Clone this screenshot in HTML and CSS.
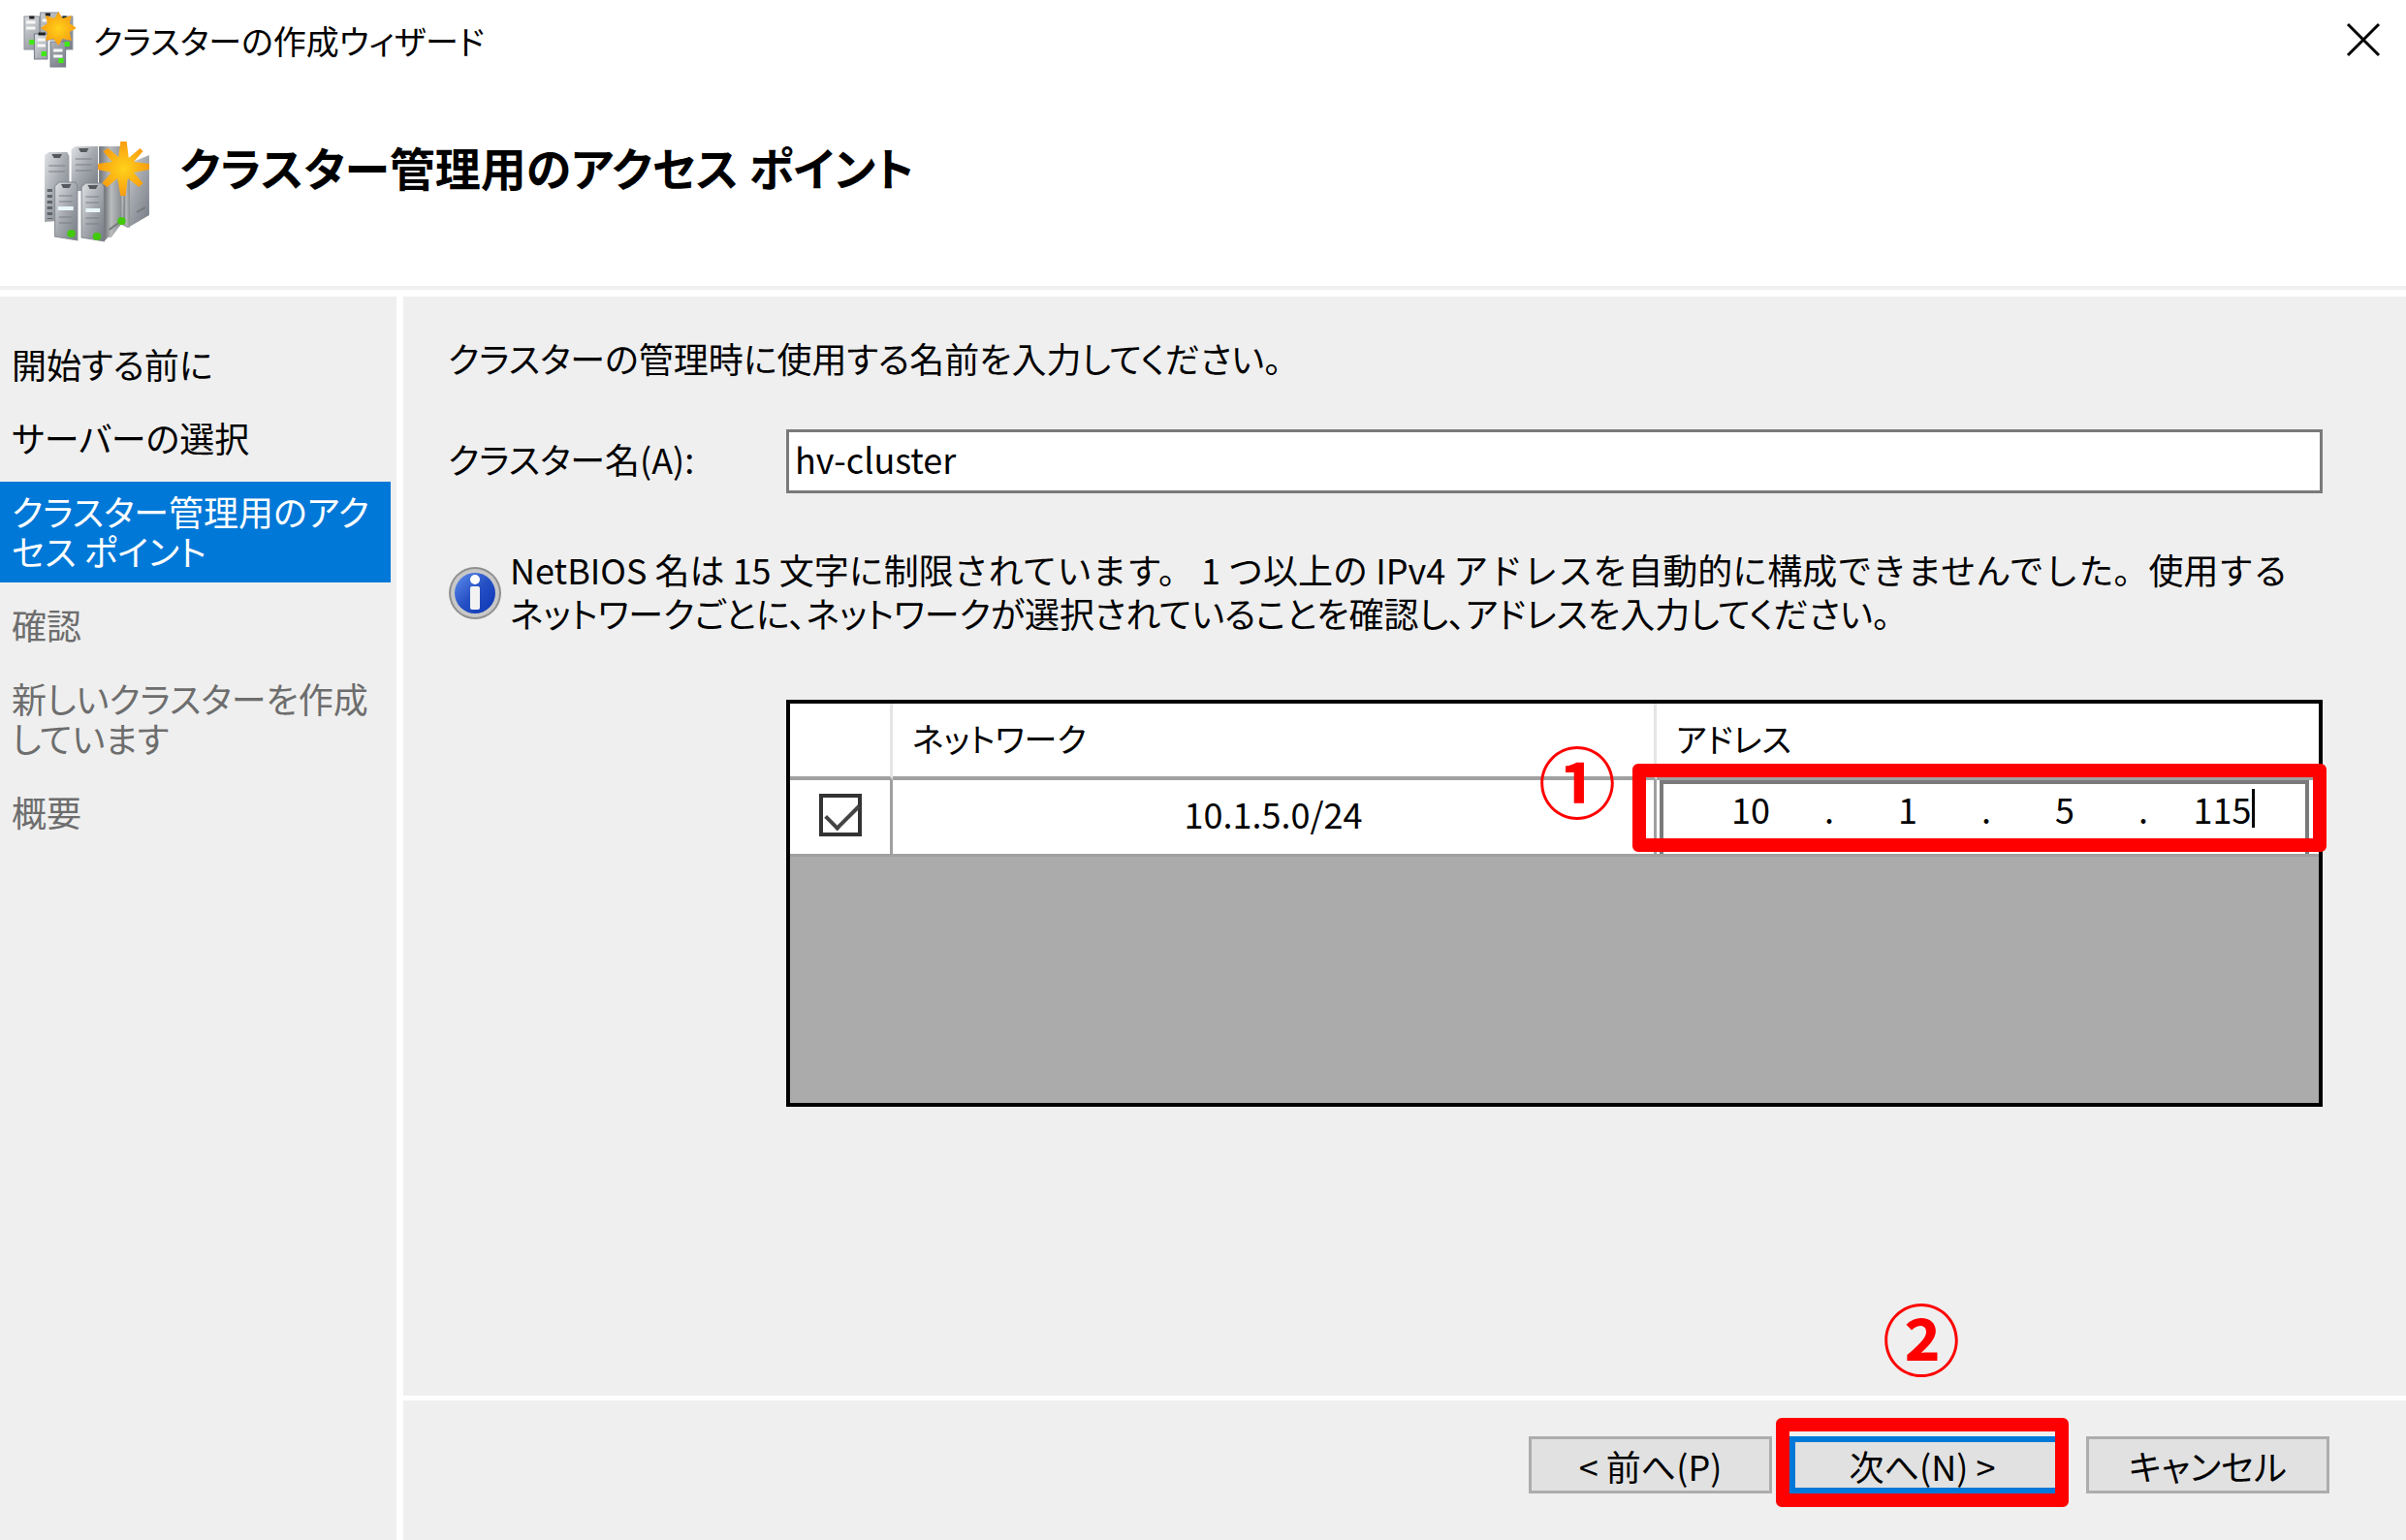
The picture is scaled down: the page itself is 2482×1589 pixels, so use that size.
FILE: index.html
```html
<!DOCTYPE html>
<html lang="ja">
<head>
    <meta charset="UTF-8">
    <meta name="viewport" content="width=device-width, initial-scale=1.0">
    <title>クラスターの作成ウィザード</title>
    <link rel="stylesheet" href="styles.css">
</head>
<body>
    <div class="titlebar">
        <svg class="titleIcon" viewBox="0 0 52 58" preserveAspectRatio="none" aria-hidden="true">
            <defs>
                <linearGradient id="metal" x1="0" x2="1" y1="0" y2="1">
                    <stop offset="0" stop-color="#e0e2e4"/>
                    <stop offset="0.5" stop-color="#a3a7ad"/>
                    <stop offset="1" stop-color="#747a84"/>
                </linearGradient>
                <linearGradient id="side" x1="0" x2="1" y1="0" y2="0">
                    <stop offset="0" stop-color="#6f7276"/>
                    <stop offset="0.4" stop-color="#b9bbbd"/>
                    <stop offset="1" stop-color="#8b8e91"/>
                </linearGradient>
                <radialGradient id="sun">
                    <stop offset="0" stop-color="#ffd21a"/>
                    <stop offset="1" stop-color="#f99d10"/>
                </radialGradient>
            </defs>
            <path fill="url(#metal)" stroke="#8a909a" d="M1 5h15v34H1zM17 1h18v28H17zM34 5h15v34H34z"/>
            <path fill="url(#metal)" stroke="#747b87" d="M11 23h13v26H11zM27 31h15v26H27z"/>
            <path stroke="#f7f7f7" stroke-width="3" d="M3 11h9M3 17h9M19 9h8M19 16h8M14 29h8M14 35h8M30 40h9M30 46h9"/>
            <path stroke="#222" stroke-width="3" d="M6 6h5M22 3h5M15 23h7M39 6h4"/>
            <path fill="url(#sun)" d="M35 0l4 7 9-3-2 8 7 5-7 4 2 9-9-2-4 7-5-7-8 2 2-9-7-4 7-5-2-8 9 3z"/>
            <path fill="#3fea14" d="M6 29h5v5H6zM18 41h5v5h-5zM35 48h5v5h-5zM41 31h5v5h-5z"/>
        </svg>
        <span class="titleText">クラスターの作成ウィザード</span>
        <button class="close" type="button" aria-label="閉じる">
            <svg viewBox="0 0 36 36" aria-hidden="true"><path d="M2 2l32 32M34 2L2 34"/></svg>
        </button>
    </div>

    <header class="header">
        <svg class="headerIcon" viewBox="0 0 104 104" preserveAspectRatio="none" aria-hidden="true">
            <path fill="url(#side)" d="M54 5h26v74l-14 20H54z"/>
            <path fill="url(#metal)" d="M80 24l23-10v62L82 89l-6-3V30z"/>
            <path fill="url(#side)" d="M78 30l6-2v61l-6-4z"/>
            <path fill="url(#metal)" d="M1 14l4-3h18l2 4v66L1 83z"/>
            <path fill="url(#metal)" d="M27 8l4-3h22v46H27z"/>
            <path fill="url(#metal)" stroke="#858a90" d="M11 46l4-4h16l2 4v56l-22-4z"/>
            <path fill="url(#metal)" stroke="#858a90" d="M37 47l4-4h16l2 4v56l-22-4z"/>
            <path fill="url(#side)" d="M59 43l17-2v44l-17 18z"/>
            <path fill="#55595e" d="M8 13h10l-2 4h-6zM34 7h10l-2 4h-6zM17 44h10l-2 4h-6zM43 45h10l-2 4h-6z"/>
            <path stroke="#7c8085" stroke-width="1" d="M5 25h16M5 31h16M31 18h16M31 24h16M31 30h16M15 56h13M15 62h13M15 78h13M15 84h13M41 57h13M41 63h13M41 79h13M41 85h13"/>
            <path stroke="#5f646b" stroke-width="5" stroke-dasharray="3 3" d="M6 49v31"/>
            <path stroke="#e9f7fa" stroke-width="4" d="M14 69h15M41 71h14"/>
            <path stroke="#77797b" stroke-width="2" d="M64 91l9-7M91 73l8-5"/>
            <path fill="url(#sun)" d="M75 0h6l2 17L94 7l3 3-9 11 15 2v6l-15 3 9 11-4 4-11-9-2 18h-5l-3-18-10 9-5-4 9-11-13-3v-6l14-2-9-11 5-3 10 9z"/>
            <circle cx="27" cy="95" r="4" fill="#41c90b"/>
            <circle cx="52" cy="98" r="4" fill="#41c90b"/>
            <circle cx="76" cy="82" r="4" fill="#41c90b"/>
        </svg>
        <h1>クラスター管理用のアクセス ポイント</h1>
    </header>

    <div class="wizard">
        <nav class="steps">
            <ul>
                <li>開始する前に</li>
                <li>サーバーの選択</li>
                <li class="current">クラスター管理用のアク<br>セス ポイント</li>
                <li class="pending">確認</li>
                <li class="pending">新しいクラスターを作成<br>しています</li>
                <li class="pending">概要</li>
            </ul>
        </nav>

        <main class="page">
            <div class="content">
                <p class="lead">クラスターの管理時に使用する名前を入力してください。</p>

                <div class="field">
                    <label for="clusterName">クラスター名(A):</label>
                    <input id="clusterName" type="text" value="hv-cluster">
                </div>

                <div class="info">
                    <svg viewBox="0 0 56 56" aria-hidden="true">
                        <defs>
                            <linearGradient id="blue" x1="0" x2="1" y1="0" y2="1">
                                <stop offset="0" stop-color="#5f8fee"/>
                                <stop offset="0.5" stop-color="#2450c4"/>
                                <stop offset="1" stop-color="#0c35b5"/>
                            </linearGradient>
                        </defs>
                        <circle cx="28" cy="28" r="27" fill="#8f8f8f"/>
                        <circle cx="28" cy="28" r="25" fill="#c8c8c8"/>
                        <circle cx="28" cy="28" r="21" fill="url(#blue)"/>
                        <circle cx="28" cy="14" r="5" fill="#fff"/>
                        <rect x="23" y="21" width="10" height="24" rx="2" fill="#f2f2f2"/>
                    </svg>
                    <p><span class="wide">NetBIOS 名は 15 文字に制限されています。 1 つ以上の IPv4 アドレスを自動的に構成できませんでした。使用する</span><br>ネットワークごとに、ネットワークが選択されていることを確認し、アドレスを入力してください。</p>
                </div>

                <div class="grid">
                    <table>
                        <thead>
                            <tr>
                                <th class="checkCol"></th>
                                <th class="networkCol">ネットワーク</th>
                                <th>アドレス</th>
                            </tr>
                        </thead>
                        <tbody>
                            <tr>
                                <td class="checkCell"><input type="checkbox" aria-label="10.1.5.0/24" checked></td>
                                <td class="network">10.1.5.0/24</td>
                                <td class="address">
                                    <div class="ip">
                                        <input type="text" value="10" aria-label="アドレス 1"><span>.</span>
                                        <input type="text" value="1" aria-label="アドレス 2"><span>.</span>
                                        <input type="text" value="5" aria-label="アドレス 3"><span>.</span>
                                        <div class="last"><input type="text" value="115" aria-label="アドレス 4"><i class="caret"></i></div>
                                    </div>
                                    <div class="highlight"></div>
                                    <span class="number">①</span>
                                </td>
                            </tr>
                        </tbody>
                    </table>
                </div>
            </div>

            <footer class="buttons">
                <button type="button">&lt; 前へ(P)</button>
                <div class="next">
                    <button type="button">次へ(N) &gt;</button>
                    <div class="highlight"></div>
                    <span class="number">②</span>
                </div>
                <button type="button">キャンセル</button>
            </footer>
        </main>
    </div>
</body>
</html>
```
FILE: styles.css
```css
*{
    box-sizing: border-box;
}
body{
    margin: 0px;
    min-height: 100vh;
    display: flex;
    flex-direction: column;
    background: white;
    color: black;
    font-family: "Noto Sans CJK JP", sans-serif;
    font-size: 36px;
    font-feature-settings: "palt";
}
input, button{
    font: inherit;
    font-feature-settings: inherit;
    color: inherit;
}
h1, p, ul{
    margin: 0px;
    padding: 0px;
}
.titlebar{
    display: flex;
    align-items: center;
    height: 84px;
    padding: 0px 24px 2px 24px;
}
.titleIcon{
    width: 54px;
    height: 58px;
    margin-right: 18px;
}
.titleText{
    flex: 1;
    font-size: 34px;
}
.close{
    background: none;
    border: none;
    padding: 0px;
    width: 38px;
    height: 36px;
}
.close svg{
    display: block;
    width: 36px;
    height: 36px;
    stroke: black;
    stroke-width: 3;
}
.header{
    display: flex;
    align-items: flex-start;
    height: 215px;
    padding: 62px 40px 0px 45px;
    border-bottom: 4px solid #f0f0f0;
}
.headerIcon{
    width: 110px;
    height: 104px;
    margin-right: 30px;
}
.header h1{
    font-size: 47px;
    line-height: 52px;
}

/* steps on the left, page on the right */
.wizard{
    flex: 1;
    display: flex;
    gap: 7px;
    margin-top: 7px;
}
.steps{
    width: 409px;
    padding: 39px 6px 0px 0px;
    background: #efefef;
}
.steps ul{
    list-style: none;
    display: flex;
    flex-direction: column;
    gap: 13px;
}
.steps li{
    padding: 10px 0px 12px 12px;
    line-height: 41px;
    white-space: nowrap;
}
.steps .current{
    background: #0078d7;
    color: white;
}
.steps .pending{
    color: #6d6d6d;
}
.page{
    flex: 1;
    display: flex;
    flex-direction: column;
    background: #efefef;
}
.content{
    flex: 1;
    padding: 40px 86px 40px 46px;
}
.lead{
    line-height: 46px;
}
.field{
    display: flex;
    align-items: center;
    margin-top: 51px;
}
.field label{
    width: 349px;
    padding-bottom: 6px;
}
.field input{
    flex: 1;
    height: 66px;
    padding: 0px 6px 6px;
    border: 3px solid #7a7a7a;
    background: white;
}
.info{
    display: flex;
    align-items: center;
    gap: 8px;
    margin-top: 56px;
    line-height: 45px;
    white-space: nowrap;
}
.info svg{
    width: 56px;
    height: 56px;
    margin-top: 4px;
}
.wide{
    font-feature-settings: normal;
}

.grid{
    height: 420px;
    margin: 67px 0px 0px 349px;
    border: 4px solid black;
    background: #ababab;
}
.grid table{
    width: 100%;
    border-collapse: separate;
    border-spacing: 0px;
    table-layout: fixed;
    background: white;
}
.grid th{
    height: 79px;
    padding: 0px 20px 4px;
    border-right: 3px solid #e5e5e5;
    border-bottom: 4px solid #a0a0a0;
    font-size: 34px;
    font-weight: normal;
    text-align: left;
}
.grid td{
    height: 79px;
    padding: 0px;
    border-right: 3px solid #a0a0a0;
    border-bottom: 3px solid #a0a0a0;
}
.grid th:last-child, .grid td:last-child{
    border-right: none;
}
.checkCol{
    width: 106px;
}
.networkCol{
    width: 788px;
}
.checkCell{
    text-align: center;
}
.checkCell input{
    appearance: none;
    display: block;
    width: 44px;
    height: 44px;
    margin: 0px auto;
    border: 4px solid #333;
    background: white;
}
.grid .checkCell{
    padding-bottom: 4px;
}
.checkCell input:checked::after{
    content: "";
    display: block;
    width: 30px;
    height: 15px;
    margin: 6px 0px 0px 3px;
    border-left: 4px solid #444;
    border-bottom: 4px solid #444;
    transform: rotate(-45deg);
}
.grid .network{
    padding-bottom: 8px;
    text-align: center;
}
.address{
    position: relative;
}
.ip{
    display: flex;
    align-items: center;
    height: 76px;
    margin: 0px 10px 0px 3px;
    padding: 0px 10px 22px 14px;
    border: 4px solid #7a7a7a;
    border-bottom: none;
}
.ip input{
    flex: 1;
    width: 100%;
    min-width: 0px;
    height: 50px;
    padding: 0px;
    border: none;
    background: none;
    text-align: center;
}
.ip span{
    width: 10px;
    text-align: center;
}
.last{
    flex: 1;
    display: flex;
    align-items: center;
    justify-content: center;
}
.last input{
    flex: none;
    width: 64px;
    text-align: right;
}
.caret{
    width: 3px;
    height: 40px;
    background: black;
}

.highlight{
    position: absolute;
    border: 14px solid #ff0000;
    border-radius: 6px;
    pointer-events: none;
}
.number{
    position: absolute;
    color: #ff0000;
    font-size: 80px;
    font-weight: bold;
    line-height: 80px;
}
.address .highlight{
    top: -17px;
    right: -8px;
    bottom: 2px;
    left: -25px;
}
.address .number{
    top: -42px;
    left: -122px;
}

.buttons{
    display: flex;
    justify-content: flex-end;
    gap: 18px;
    padding: 37px 79px 48px;
    border-top: 5px solid white;
}
.buttons button{
    width: 251px;
    height: 59px;
    padding: 0px;
    border: 3px solid #adadad;
    background: #e1e1e1;
    line-height: 48px;
}
.next{
    position: relative;
}
.next button{
    width: 288px;
    border: 6px solid #0078d7;
    padding-right: 14px;
    line-height: 42px;
}
.next .highlight{
    top: -19px;
    right: 0px;
    bottom: -14px;
    left: -14px;
}
.next .number{
    top: -144px;
    left: 96px;
}
```
